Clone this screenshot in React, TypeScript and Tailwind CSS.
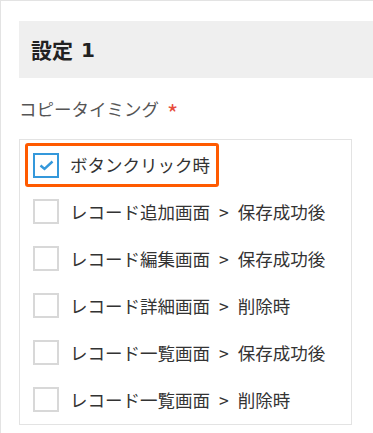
import React from 'react';

const options = [
  { label: 'ボタンクリック時', checked: true },
  { label: 'レコード追加画面 > 保存成功後', checked: false },
  { label: 'レコード編集画面 > 保存成功後', checked: false },
  { label: 'レコード詳細画面 > 削除時', checked: false },
  { label: 'レコード一覧画面 > 保存成功後', checked: false },
  { label: 'レコード一覧画面 > 削除時', checked: false },
];

const Checkbox = ({ checked }: { checked: boolean }) => (
  <span
    className={
      checked
        ? 'flex h-[25px] w-[26px] shrink-0 items-center justify-center border-2 border-[#3498db] bg-white'
        : 'flex h-[25px] w-[26px] shrink-0 items-center justify-center border-2 border-[#d8d8d8] bg-white'
    }
  >
    {checked && (
      <svg width="15" height="11" viewBox="0 0 15 11" fill="none">
        <path d="M1.5 5.5 L5.5 9 L13.5 1.5" stroke="#3498db" strokeWidth="2.4" />
      </svg>
    )}
  </span>
);

// " > " in the labels gets wider spacing, as in the original font
const Label = ({ text }: { text: string }) => {
  const parts = text.split(' > ');
  return (
    <span className="whitespace-nowrap text-[17.5px] leading-none">
      {parts[0]}
      {parts[1] && (
        <>
          <span className="mx-[9px]">&gt;</span>
          {parts[1]}
        </>
      )}
    </span>
  );
};

export default function App() {
  return (
    <div
      className="min-h-screen overflow-hidden border-l border-t border-[#e3e3e3] bg-white pl-[18px] pt-[20px] text-[#333]"
      style={{ fontFamily: '"Noto Sans CJK JP", "Noto Sans", sans-serif' }}
    >
      <div className="flex h-[57px] w-[420px] items-center bg-[#efefef] pl-3">
        <h2 className="flex items-center text-[21px] font-bold leading-none text-[#222]">
          設定
          <span className="ml-[8px] font-['DejaVu_Sans',sans-serif] text-[20px]">1</span>
        </h2>
      </div>

      <div className="mt-[20px] flex h-[22px] items-center text-[17.5px] leading-none text-[#555]">
        コピータイミング
        <span className="relative top-[4px] ml-[8px] text-[24px] text-[#e74c3c]">*</span>
      </div>

      <div className="mt-[19px] w-[333px] border border-[#e3e3e3] py-px">
        {options.map((o, i) =>
          i === 0 ? (
            <div key={o.label} className="flex h-[47px] items-center pl-[5px] pt-[1px]">
              <div className="flex h-[44px] items-center gap-[11px] rounded-[3px] border-[3px] border-[#ff5a00] pl-[5px] pr-[6px]">
                <Checkbox checked={o.checked} />
                <Label text={o.label} />
              </div>
            </div>
          ) : (
            <div key={o.label} className="flex h-[47px] items-center gap-[11px] pl-[13px]">
              <Checkbox checked={o.checked} />
              <Label text={o.label} />
            </div>
          )
        )}
      </div>
    </div>
  );
}
